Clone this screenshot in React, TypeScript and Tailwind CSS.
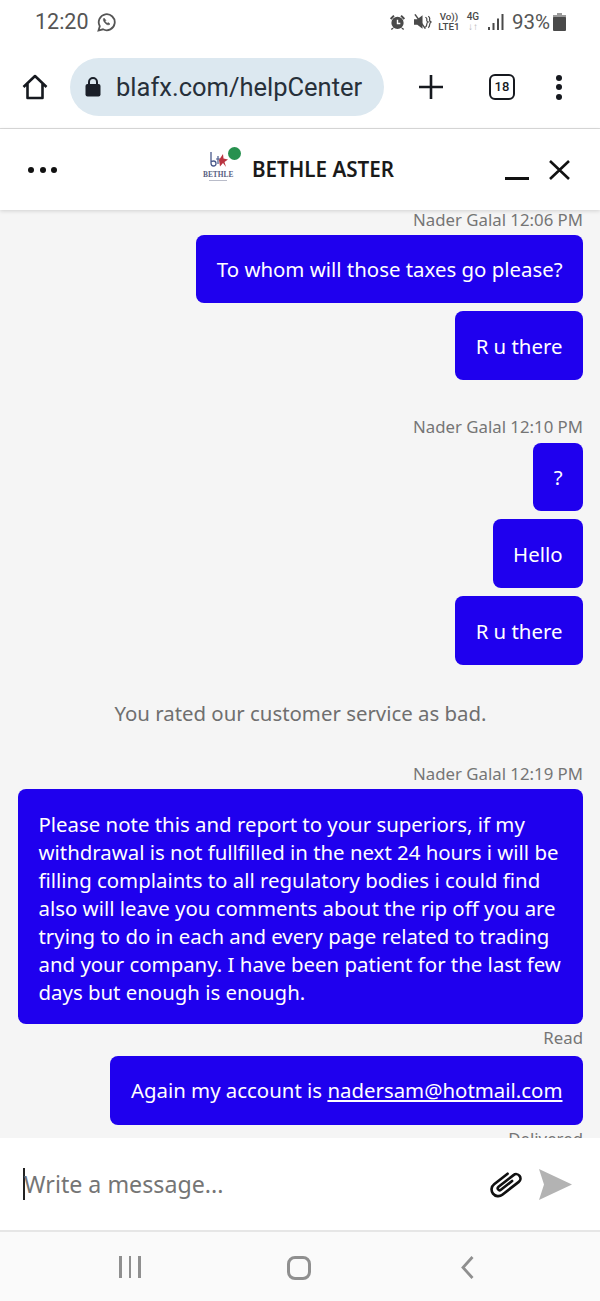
import type { ReactNode } from 'react'

const NOTO = 'font-["Noto_Sans",sans-serif]'

function Stamp({ children, className = '' }: { children: ReactNode; className?: string }) {
  return <div className={`${NOTO} text-right text-[16.8px] leading-[20px] text-[#757575] ${className}`}>{children}</div>
}

function Bubble({ children, className = '' }: { children: ReactNode; className?: string }) {
  return (
    <div className={`ml-auto w-fit rounded-[8px] bg-[#1f00ee] px-[20.5px] ${NOTO} text-[20.4px] leading-[28px] text-white ${className}`}>
      {children}
    </div>
  )
}

function StatusIcons() {
  return (
    <div className="flex items-center text-[#4a4a4a]">
      {/* alarm */}
      <svg width="17" height="18" viewBox="0 0 18 18" className="mr-[8px]" fill="currentColor">
        <circle cx="9" cy="10" r="6.5" />
        <path d="M1 5l3.5-3.5 1.5 1.500L2.500 6.500zM17 5l-3.500-3.500L12 3l3.500 3.500zM3.500 15l-1.500 1.500 1 1 2-2zM14.500 15l1.500 1.500-1 1-2-2z" />
        <path d="M9 6.500V10.500h3" fill="none" stroke="#fff" strokeWidth="1.500" />
      </svg>
      {/* mute */}
      <svg width="18" height="18" viewBox="0 0 19 18" className="mr-[7px]" fill="currentColor">
        <path d="M0 6h3.500L9 2v14l-5.500-4H0z" />
        <path d="M1 1l11 15" stroke="currentColor" strokeWidth="1.600" />
        <path d="M12 4q2 1 1.500 2.500T15 9q-1.500.5-1.500 2.500T12 14.500M15 3q2 1 1.500 3T18 9q-1.500 1-1.500 3T15 15" fill="none" stroke="currentColor" strokeWidth="1.300" />
      </svg>
      <div className="mr-[7px] flex w-[20px] flex-col items-center font-['Roboto',sans-serif] text-[9.800px] font-medium leading-[10.500px]">
        <span>Vo))</span>
        <span>LTE1</span>
      </div>
      <div className="mr-[8px] flex w-[14px] flex-col items-center font-['Roboto',sans-serif] text-[10px] font-medium leading-[10.500px]">
        <span>4G</span>
        <span className="text-[#b5b5b5]">↓↑</span>
      </div>
      {/* signal */}
      <svg width="16" height="16" viewBox="0 0 16 16" className="mr-[8px]" fill="currentColor">
        <rect x="0" y="13" width="2" height="3" />
        <rect x="4.500" y="9" width="2" height="7" />
        <rect x="9" y="4.500" width="2" height="11.500" />
        <rect x="13.500" y="0" width="2" height="16" />
      </svg>
      <span className="font-['Roboto',sans-serif] text-[20.500px] leading-[24px] text-[#555]">93%</span>
      {/* battery */}
      <svg width="13" height="18" viewBox="0 0 13 18" className="ml-[3px]" fill="currentColor">
        <rect x="4" y="0" width="5" height="2" fill="#9a9a9a" />
        <rect x="0" y="2" width="13" height="3" fill="#9a9a9a" />
        <rect x="0" y="4" width="13" height="14" rx="1" />
      </svg>
    </div>
  )
}

function Logo() {
  return (
    <div className="relative h-[44px] w-[34px]">
      <svg width="20" height="18" viewBox="0 0 20 18" className="absolute left-[6px] top-[4px]" fill="none">
        <path d="M2 0v11q0 3 2.500 3T7 11.500 4.500 9 2 10.500" stroke="#4a5a8c" strokeWidth="1.300" />
        <path d="M7 7h4M9 4v8" stroke="#4a5a8c" strokeWidth="1.200" />
        <path d="M10 8l4-6 .5 4.500 4.500 1-3.500 2.500 1.500 5-3-4-3 3.500z" fill="#b93440" />
      </svg>
      <div className="absolute left-0 top-[22px] w-[30px] text-center font-['Liberation_Serif',serif] text-[7.400px] font-bold leading-[10px] text-[#57607f]">
        BETHLE
      </div>
      <div className="absolute left-[6px] top-[32.500px] h-px w-[18px] bg-[#b9bcc9]" />
      <span className="absolute left-[25px] top-[-1px] h-[13px] w-[13px] rounded-full bg-[#27914f]" />
    </div>
  )
}

export default function App() {
  return (
    <div className="flex h-[1301px] w-[600px] flex-col overflow-hidden bg-white">
      {/* status bar */}
      <div className="flex h-[44px] shrink-0 items-center justify-between bg-white pl-[35px] pr-[34px]">
        <div className="flex items-center font-['Roboto',sans-serif] text-[21.500px] text-[#555]">
          <span>12:20</span>
          <svg width="20" height="20" viewBox="0 0 20 20" className="ml-[8px]" fill="none" stroke="#555" strokeWidth="1.800">
            <path d="M1.500 18.500l1.300-4.300A8 8 0 1 1 6 17.300z" />
            <path d="M7 6c-1.200 1-.8 3 1 5s4 2.500 5 1l-1.800-1.400-1 .7c-.8-.3-1.500-1-2-2l.7-1z" fill="#555" strokeWidth="0.500" />
          </svg>
        </div>
        <StatusIcons />
      </div>

      {/* browser bar */}
      <div className="flex h-[85px] shrink-0 items-start border-b border-[#dcdcdc] bg-white pt-[14px]">
        <div className="flex h-[58px] w-[70px] shrink-0 items-center justify-center">
          <svg width="26" height="26" viewBox="0 0 26 26" fill="none" stroke="#16191f" strokeWidth="2.600" strokeLinejoin="round" className="ml-[-1px]">
            <path d="M1.500 13L13 2l11.500 11M5.500 10v14h15V10" />
          </svg>
        </div>
        <div className="flex h-[58px] w-[314px] shrink-0 items-center rounded-full bg-[#dce8f0] pl-[15px]">
          <svg width="16" height="20" viewBox="0 0 16 20" fill="#1b2029">
            <rect x="0.500" y="7" width="15" height="12.500" rx="2" />
            <path d="M4 8V5a4 4 0 0 1 8 0v3" fill="none" stroke="#1b2029" strokeWidth="2" />
          </svg>
          <span className="ml-[15px] font-['Roboto',sans-serif] text-[25.500px] text-[#27303a]">blafx.com/helpCenter</span>
        </div>
        <div className="flex h-[58px] flex-1 items-center pl-[35px]">
          <svg width="24" height="24" viewBox="0 0 24 24" stroke="#16191f" strokeWidth="2.600">
            <path d="M0 12h24M12 0v24" />
          </svg>
          <div className="ml-[46px] flex h-[26px] w-[26px] items-center justify-center rounded-[6px] border-[2.500px] border-[#16191f] font-['Roboto',sans-serif] text-[13px] font-medium text-[#16191f]">
            18
          </div>
          <div className="ml-[41px] flex flex-col gap-[3.500px]">
            <span className="h-[6px] w-[6px] rounded-full bg-[#16191f]" />
            <span className="h-[6px] w-[6px] rounded-full bg-[#16191f]" />
            <span className="h-[6px] w-[6px] rounded-full bg-[#16191f]" />
          </div>
        </div>
      </div>

      {/* chat header */}
      <div className="relative z-10 flex h-[81px] shrink-0 items-center bg-white pl-[28px] pr-[30px] shadow-[0_1px_4px_rgba(0,0,0,0.15)]">
        <div className="flex w-[175px] gap-[5.500px]">
          <span className="h-[6px] w-[6px] rounded-full bg-[#111]" />
          <span className="h-[6px] w-[6px] rounded-full bg-[#111]" />
          <span className="h-[6px] w-[6px] rounded-full bg-[#111]" />
        </div>
        <Logo />
        <span className={`ml-[15px] ${NOTO} text-[20.600px] font-semibold text-[#1a1a1a]`}>BETHLE ASTER</span>
        <div className="ml-auto flex items-center gap-[20px]">
          <span className="mt-[17px] h-[3px] w-[24px] bg-[#111]" />
          <svg width="21" height="20" viewBox="0 0 21 20" stroke="#111" strokeWidth="2.600">
            <path d="M1 1l19 18M20 1L1 19" />
          </svg>
        </div>
      </div>

      {/* messages */}
      <div className="flex min-h-0 flex-1 flex-col overflow-hidden bg-[#f5f5f5] pl-[18px] pr-[17px] pt-0">
        <Stamp>Nader Galal 12:06 PM</Stamp>
        <Bubble className="mt-[5px] py-[20px]">To whom will those taxes go please?</Bubble>
        <Bubble className="mt-[8px] py-[20.500px]">R u there</Bubble>
        <Stamp className="mt-[37px]">Nader Galal 12:10 PM</Stamp>
        <Bubble className="mt-[6px] py-[20px]">?</Bubble>
        <Bubble className="mt-[8px] py-[20.500px]">Hello</Bubble>
        <Bubble className="mt-[8px] py-[20.500px]">R u there</Bubble>
        <div className={`mt-[34px] mb-[37px] text-center ${NOTO} text-[20.400px] leading-[28px] text-[#6f6f6f]`}>
          You rated our customer service as bad.
        </div>
        <Stamp>Nader Galal 12:19 PM</Stamp>
        <Bubble className="mt-[5px] w-full pt-[21px] pb-[18px]">
          Please note this and report to your superiors, if my withdrawal is not fullfilled in the next 24 hours i will be filling complaints to all regulatory bodies i could find also will leave you comments about the rip off you are trying to do in each and every page related to trading and your company. I have been patient for the last few days but enough is enough.
        </Bubble>
        <Stamp className="mt-[4px]">Read</Stamp>
        <Bubble className="mt-[8px] py-[20.250px]">
          Again my account is <span className="underline">nadersam@hotmail.com</span>
        </Bubble>
        <Stamp className="mt-[4px]">Delivered</Stamp>
      </div>

      {/* input */}
      <div className="flex h-[94px] shrink-0 items-center border-b-2 border-[#e6e6e6] bg-white pl-[23px] pr-[28px]">
        <span className="h-[32px] w-[2px] bg-[#222]" />
        <span className={`ml-[-1px] mt-[1px] ${NOTO} text-[23.200px] text-[#757575]`}>Write a message...</span>
        <svg width="32" height="28" viewBox="0 0 32 28" fill="none" stroke="#111" strokeWidth="2.800" strokeLinecap="round" className="ml-auto overflow-visible">
          <g transform="rotate(52 16 14) translate(16 14) scale(0.95) translate(-16 -16)">
            <path d="M8.500 8V26a7 7 0 0 0 14 0V4a4.500 4.500 0 0 0-9 0V24a2 2 0 0 0 4 0V9" />
          </g>
        </svg>
        <svg width="34" height="31" viewBox="0 0 34 31" fill="#b3b3b3" className="ml-[16px]">
          <path d="M1 0l33 15.500L1 31l5-15.500z" />
        </svg>
      </div>

      {/* android nav */}
      <div className="flex h-[69px] shrink-0 items-start bg-[#fafafa] pl-[119px] pt-[24px]">
        <div className="flex gap-[7px]">
          <span className="h-[22px] w-[2.500px] bg-[#8f8f8f]" />
          <span className="h-[22px] w-[2.500px] bg-[#8f8f8f]" />
          <span className="h-[22px] w-[2.500px] bg-[#8f8f8f]" />
        </div>
        <div className="ml-[146px] h-[24px] w-[24px] rounded-[8px] border-[3px] border-[#8f8f8f]" />
        <svg width="13" height="23" viewBox="0 0 13 23" fill="none" stroke="#8f8f8f" strokeWidth="2.800" className="ml-[150px]">
          <path d="M11.500 1L2 11.500 11.500 22" />
        </svg>
      </div>
    </div>
  )
}
